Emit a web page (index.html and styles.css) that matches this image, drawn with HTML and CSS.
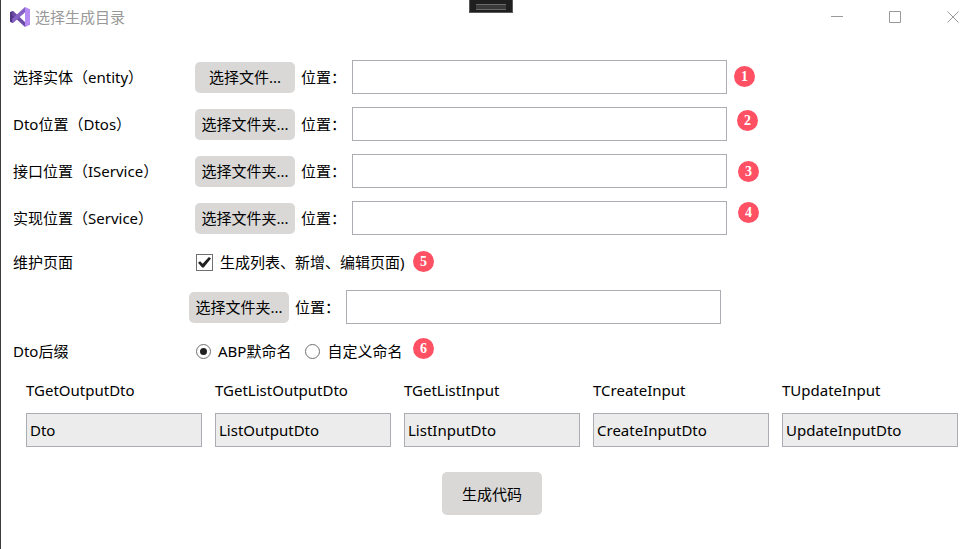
FILE: index.html
```html
<!DOCTYPE html>
<html lang="zh-CN">
<head>
    <meta charset="UTF-8">
    <meta name="viewport" content="width=device-width, initial-scale=1.0">
    <title>选择生成目录</title>
    <link rel="stylesheet" href="styles.css">
</head>
<body>
    <div class="window">
        <header class="titlebar">
            <svg class="logo" viewBox="0 0 20 20" aria-hidden="true">
                <path fill="#52368a" d="M0 5.2 2.2 4 4 5v10l-1.8 1L0 14.800z"/>
                <path fill="#6b4aa8" d="M2.200 4 4 4.800 16.500 16.500 15 20 2.200 8.200z"/>
                <path fill="#8661c5" d="M2.200 16 4 15.200 16.500 4 15 0 2.200 11.800z"/>
                <path fill="#b58af5" d="M15 0 20 2.300v15.400L15 20z"/>
            </svg>
            <h1>选择生成目录</h1>
            <div class="window-buttons">
                <button type="button" aria-label="最小化">
                    <svg viewBox="0 0 12 12"><path d="M0 5.500h12"/></svg>
                </button>
                <button type="button" aria-label="最大化">
                    <svg viewBox="0 0 12 12"><path d="M.5.5h11v11H.5z"/></svg>
                </button>
                <button type="button" aria-label="关闭">
                    <svg viewBox="0 0 12 12"><path d="M.5.5l11 11M11.500.5l-11 11"/></svg>
                </button>
            </div>
        </header>
        <div class="handle"></div>

        <form class="form">
            <div class="row">
                <span class="name">选择实体（entity）</span>
                <button type="button" class="pick">选择文件...</button>
                <label for="entityPath">位置：</label>
                <input type="text" class="path" id="entityPath">
            </div>
            <div class="row">
                <span class="name">Dto位置（Dtos）</span>
                <button type="button" class="pick">选择文件夹...</button>
                <label for="dtoPath">位置：</label>
                <input type="text" class="path" id="dtoPath">
            </div>
            <div class="row">
                <span class="name">接口位置（IService）</span>
                <button type="button" class="pick">选择文件夹...</button>
                <label for="interfacePath">位置：</label>
                <input type="text" class="path" id="interfacePath">
            </div>
            <div class="row">
                <span class="name">实现位置（Service）</span>
                <button type="button" class="pick">选择文件夹...</button>
                <label for="servicePath">位置：</label>
                <input type="text" class="path" id="servicePath">
            </div>
            <div class="row row-options">
                <span class="name">维护页面</span>
                <label class="option"><input type="checkbox" checked>生成列表、新增、编辑页面)</label>
            </div>
            <div class="row row-pages">
                <button type="button" class="pick">选择文件夹...</button>
                <label for="pagePath">位置：</label>
                <input type="text" class="path" id="pagePath">
            </div>
            <div class="row row-options">
                <span class="name">Dto后缀</span>
                <label class="option"><input type="radio" name="naming" checked>ABP默命名</label>
                <label class="option"><input type="radio" name="naming">自定义命名</label>
            </div>

            <div class="suffixes">
                <div class="suffix">
                    <label for="getOutput">TGetOutputDto</label>
                    <input type="text" id="getOutput" value="Dto" readonly>
                </div>
                <div class="suffix">
                    <label for="getListOutput">TGetListOutputDto</label>
                    <input type="text" id="getListOutput" value="ListOutputDto" readonly>
                </div>
                <div class="suffix">
                    <label for="getListInput">TGetListInput</label>
                    <input type="text" id="getListInput" value="ListInputDto" readonly>
                </div>
                <div class="suffix">
                    <label for="createInput">TCreateInput</label>
                    <input type="text" id="createInput" value="CreateInputDto" readonly>
                </div>
                <div class="suffix">
                    <label for="updateInput">TUpdateInput</label>
                    <input type="text" id="updateInput" value="UpdateInputDto" readonly>
                </div>
            </div>

            <div class="actions">
                <button type="submit" class="generate">生成代码</button>
            </div>
        </form>

        <!-- 步骤标注 -->
        <span class="pin pin-1">1</span>
        <span class="pin pin-2">2</span>
        <span class="pin pin-3">3</span>
        <span class="pin pin-4">4</span>
        <span class="pin pin-5">5</span>
        <span class="pin pin-6">6</span>
    </div>
</body>
</html>
```
FILE: styles.css
```css
* {
    box-sizing: border-box;
}
body {
    margin: 0;
    background-color: #fff;
    color: #000;
}
body, button, input {
    font-family: "Noto Sans", "Noto Sans CJK SC", sans-serif;
    font-size: 15px;
    line-height: 20px;
}
.window {
    position: relative;
    min-height: 100vh;
    border-left: 1px solid #3c3c3f;
}

/* 标题栏 */
.titlebar {
    display: flex;
    align-items: center;
    height: 34px;
    padding-left: 9px;
    gap: 5px;
}
.logo {
    width: 20px;
    height: 20px;
}
h1 {
    margin: 0;
    font-size: 15px;
    font-weight: normal;
    color: #999;
}
.window-buttons {
    display: flex;
    gap: 6px;
    margin-left: auto;
}
.window-buttons button {
    display: flex;
    align-items: center;
    justify-content: center;
    width: 52px;
    height: 34px;
    padding: 0;
    border: none;
    background: none;
}
.window-buttons svg {
    width: 12px;
    height: 12px;
    fill: none;
    stroke: #999;
}
.handle {
    position: absolute;
    top: 0;
    left: 468px;
    width: 44px;
    height: 13px;
    padding: 4px 6px;
    border: 1px solid #5a5a5a;
    border-top: none;
    background-color: #1f1f1f;
}
.handle::before {
    content: "";
    display: block;
    height: 4px;
    border: solid #6a6a6a;
    border-width: 1px 0;
    background-color: #3a3a3a;
}

/* 表单 */
.form {
    display: flex;
    flex-direction: column;
    padding: 26px 21px 32px 12px;
}
.row {
    display: flex;
    align-items: center;
    min-height: 34px;
    margin-bottom: 13px;
}
.name {
    width: 182px;
}
.pick, .generate {
    border: none;
    border-radius: 5px;
    background-color: #d9d8d7;
    color: #000;
    padding: 0;
    white-space: nowrap;
}
.pick {
    width: 100px;
    height: 31px;
    margin-right: 6px;
}
.path {
    width: 375px;
    margin-left: 6px;
}
input[type="text"] {
    height: 34px;
    padding: 0 3px;
    border: 1px solid #abadb3;
    background-color: #fff;
    color: #000;
}
.row-options {
    min-height: 28px;
    margin-bottom: 14px;
}
.row-pages {
    padding-left: 176px;
}
.option {
    display: flex;
    align-items: center;
    gap: 7px;
    margin-right: 13px;
}
.option input {
    appearance: none;
    position: relative;
    margin: 0 0 0 1px;
    border: 1px solid #707070;
    background-color: #fff;
}
.option input[type="checkbox"] {
    width: 17px;
    height: 17px;
}
.option input[type="checkbox"]:checked::before {
    content: "";
    position: absolute;
    inset: 2px 1px;
    background-color: #212121;
    clip-path: polygon(0 56%, 16% 44%, 36% 66%, 84% 4%, 100% 18%, 44% 100%, 32% 100%);
}
.option input[type="radio"] {
    width: 15px;
    height: 15px;
    border-radius: 50%;
}
.option input[type="radio"]:checked::before {
    content: "";
    position: absolute;
    inset: 3px;
    border-radius: 50%;
    background-color: #212121;
}
.suffixes {
    display: grid;
    grid-template-columns: repeat(5, 1fr);
    gap: 13px;
    margin-top: 1px;
    padding-left: 13px;
}
.suffix {
    display: flex;
    flex-direction: column;
    gap: 13px;
}
.suffix input[type="text"] {
    width: 100%;
    background-color: #ececec;
}
.actions {
    display: flex;
    justify-content: center;
    padding: 25px 0 0 13px;
}
.generate {
    width: 100px;
    height: 43px;
}

/* 圆形编号 */
.pin {
    position: absolute;
    width: 21px;
    height: 21px;
    border-radius: 50%;
    background-color: #ff5064;
    color: #fff;
    font: bold 14px/21px "Liberation Serif", serif;
    text-align: center;
}
.pin-1 {
    left: 733px;
    top: 66px;
}
.pin-2 {
    left: 736px;
    top: 110px;
}
.pin-3 {
    left: 737px;
    top: 161px;
}
.pin-4 {
    left: 737px;
    top: 202px;
}
.pin-5 {
    left: 412px;
    top: 251px;
}
.pin-6 {
    left: 412px;
    top: 338px;
}
```
